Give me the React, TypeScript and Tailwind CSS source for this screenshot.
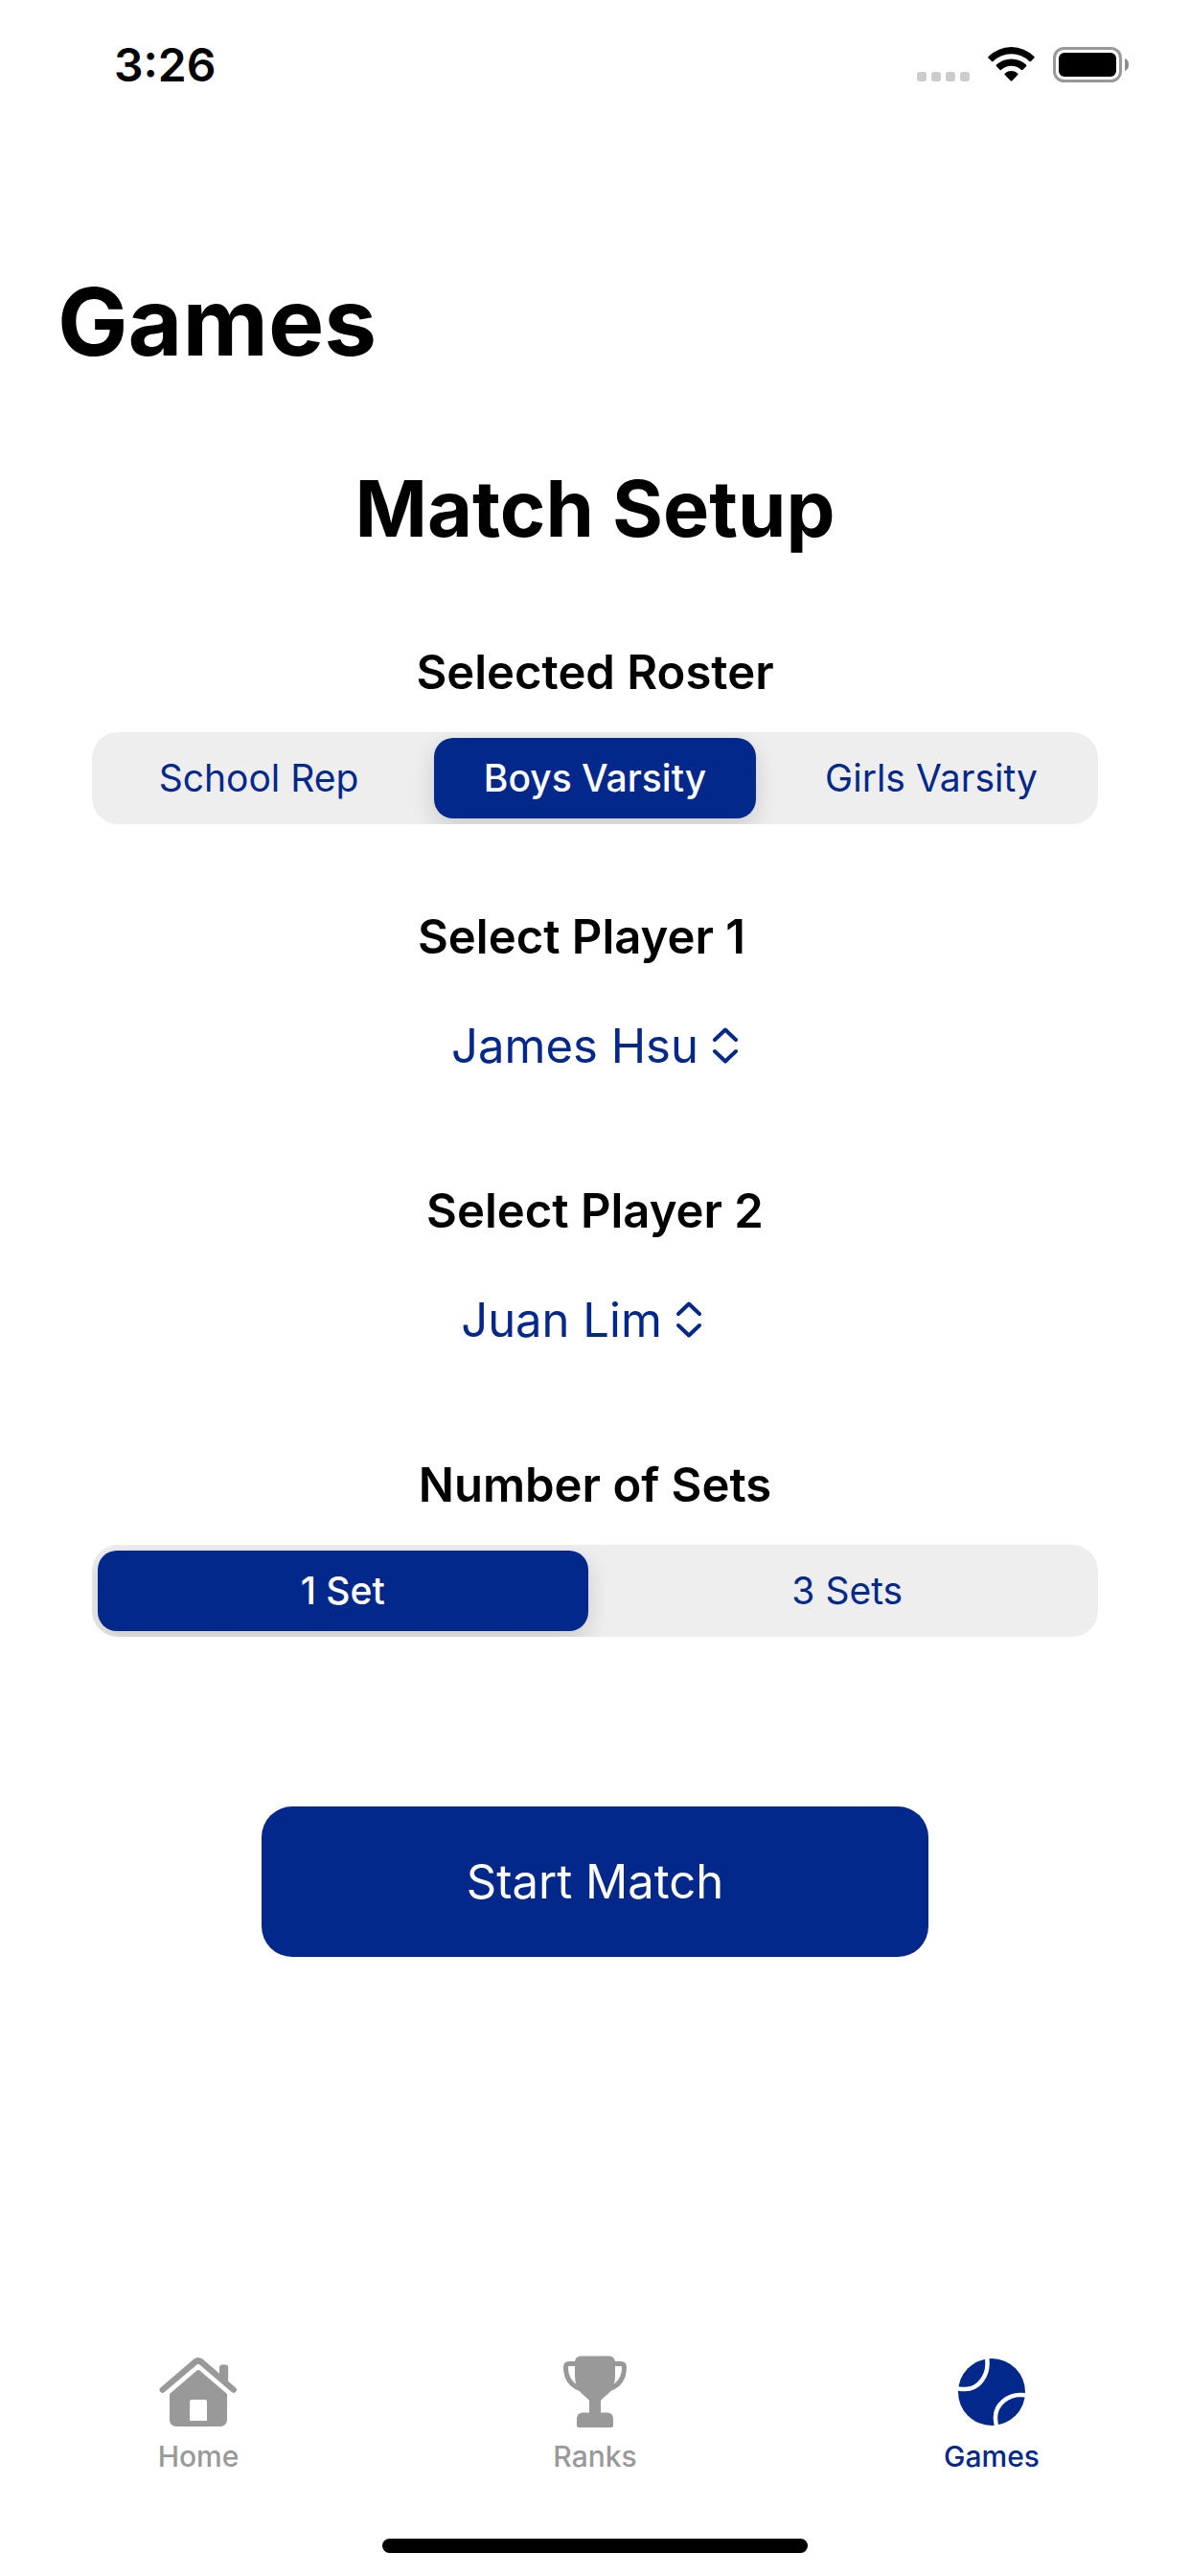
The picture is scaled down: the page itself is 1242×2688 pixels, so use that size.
import { useState, type ReactNode } from "react";

function WifiIcon() {
  return (
    <svg width="49" height="36" viewBox="0 0 49 36" aria-hidden="true">
      <path d="M0.6 9.9a34 34 0 0 1 47.8 0a1.2 1.2 0 0 1 0 1.6l-3.4 3.4a1.2 1.2 0 0 1-1.7 0a27 27 0 0 0-37.6 0a1.2 1.2 0 0 1-1.7 0l-3.4-3.4a1.2 1.2 0 0 1 0-1.6Z" />
      <path d="M9 18.6a22.6 22.6 0 0 1 31 0a1.2 1.2 0 0 1 0 1.7l-3.5 3.5a1.2 1.2 0 0 1-1.7 0a15.2 15.2 0 0 0-20.6 0a1.2 1.2 0 0 1-1.7 0l-3.5-3.5a1.2 1.2 0 0 1 0-1.7Z" />
      <path d="M17.9 27.5a10.3 10.3 0 0 1 13.2 0a1.1 1.1 0 0 1 0 1.7l-5.8 6.1a1.1 1.1 0 0 1-1.6 0l-5.8-6.1a1.1 1.1 0 0 1 0-1.7Z" />
    </svg>
  );
}

function BatteryIcon() {
  return (
    <svg width="80" height="37" viewBox="0 0 80 37" aria-hidden="true">
      <rect x="1.5" y="1.5" width="69" height="34" rx="10" fill="none" stroke="#999" strokeWidth="3" />
      <rect x="6" y="6" width="60" height="25" rx="6" />
      <path d="M75 12v13a6.8 6.8 0 0 0 4-6.5A6.8 6.8 0 0 0 75 12Z" fill="#8c8c8c" />
    </svg>
  );
}

function HomeIcon() {
  return (
    <svg width="82" height="75" viewBox="0 0 82 75" fill="currentColor" aria-hidden="true">
      <path d="M1.5 33.5 36.5 3.6a6.5 6.5 0 0 1 8.8 0L63 18.8V12.5a3 3 0 0 1 3-3h3.2a3 3 0 0 1 3 3v14.3l8 6.9a3.1 3.1 0 0 1-4.2 4.5L43 10a3.2 3.2 0 0 0-4.2 0L5.8 38A3.1 3.1 0 0 1 1.5 33.5Z" />
      <path
        fillRule="evenodd"
        d="M11 40 39 16a3 3 0 0 1 4 0l28 24v27a7 7 0 0 1-7 7H18a7 7 0 0 1-7-7V40Zm21 8v20h18V48a2 2 0 0 0-2-2H34a2 2 0 0 0-2 2Z"
      />
    </svg>
  );
}

function TrophyIcon() {
  return (
    <svg width="66" height="75" viewBox="0 0 66 75" fill="currentColor" aria-hidden="true">
      <path d="M18 0.5h30a6 6 0 0 1 6 6V20c0 8-2 14-6 18.5-3.5 3.5-7 5.5-9 8.5v13H27V47c-2-3-5.5-5-9-8.5C14 34 12 28 12 20V6.500a6 6 0 0 1 6-6Z" />
      <path
        d="M15 8.5H6Q2.5 8.5 2.5 12C2.5 24 9 31.5 18 35M51 8.5h9q3.5 0 3.5 3.5C63.5 24 57 31.5 48 35"
        fill="none"
        stroke="currentColor"
        strokeWidth="5"
      />
      <path d="M20 59.5h26a6 6 0 0 1 6 6V73a2 2 0 0 1-2 2H16a2 2 0 0 1-2-2v-7.5a6 6 0 0 1 6-6Z" />
    </svg>
  );
}

function TennisBallIcon() {
  return (
    <svg width="70" height="75" viewBox="0 0 70 75" aria-hidden="true">
      <circle cx="35" cy="38" r="35" fill="currentColor" />
      <path
        d="M30 2C33 20 22 35 7 35Q3 35 -1 34.3M71 41.5C52 38 38 52 39 66Q39 70 40.5 74"
        fill="none"
        stroke="#fff"
        strokeWidth="4.5"
      />
    </svg>
  );
}

function StatusBar() {
  return (
    <header className="flex items-start justify-between pt-[38px] pr-[63px] pl-[119px]">
      <time className="text-[48px] leading-[60px] font-semibold">3:26</time>
      <div className="flex items-end pt-[11px]">
        <div className="mr-[19px] flex gap-[5px] pb-px">
          {[0, 1, 2, 3].map((dot) => (
            <span key={dot} className="size-[10px] rounded-[3px] bg-[#ccc]" />
          ))}
        </div>
        <div className="mr-[19px] pb-px">
          <WifiIcon />
        </div>
        <BatteryIcon />
      </div>
    </header>
  );
}

type SegmentedProps = {
  name: string;
  label: string;
  options: string[];
  value: string;
  onChange: (value: string) => void;
};

function Segmented({ name, label, options, value, onChange }: SegmentedProps) {
  return (
    <fieldset className="w-full">
      <legend className="mx-auto mb-8 text-[49px] leading-[60px] font-semibold">{label}</legend>
      <div className="grid auto-cols-fr grid-flow-col gap-[15px] overflow-hidden rounded-[27px] bg-[#eee] p-[6px]">
        {options.map((option) => (
          <label
            key={option}
            className="flex h-[84px] cursor-pointer items-center justify-center rounded-[20px] text-[39px] text-[#02288c] has-checked:bg-[#02288c] has-checked:font-medium has-checked:text-white has-checked:shadow-[0_9px_24px_rgba(0,0,0,0.15)]"
          >
            <input
              type="radio"
              name={name}
              value={option}
              checked={option === value}
              onChange={() => onChange(option)}
              className="sr-only"
            />
            {option}
          </label>
        ))}
      </div>
    </fieldset>
  );
}

type PickerProps = {
  id: string;
  label: string;
  options: string[];
  value: string;
  onChange: (value: string) => void;
};

function Picker({ id, label, options, value, onChange }: PickerProps) {
  return (
    <div className="flex flex-col items-center gap-[54px] odd:*:first:pr-7 even:*:last:pr-7">
      <label htmlFor={id} className="text-[49px] leading-[60px] font-semibold">
        {label}
      </label>
      <div>
        <div className="relative text-[#02288c]">
          <select
            id={id}
            value={value}
            onChange={(event) => onChange(event.target.value)}
            className="field-sizing-content h-[60px] cursor-pointer appearance-none bg-transparent pr-[42px] text-[49px] leading-[60px]"
          >
            {options.map((option) => (
              <option key={option}>{option}</option>
            ))}
          </select>
          <svg
            className="pointer-events-none absolute top-[9px] right-0"
            width="28"
            height="40"
            viewBox="0 0 28 40"
            fill="none"
            stroke="currentColor"
            strokeWidth="4"
            strokeLinecap="round"
            strokeLinejoin="round"
            aria-hidden="true"
          >
            <path d="M3 14 14 3.5 25 14M3 26 14 36.5 25 26" />
          </svg>
        </div>
      </div>
    </div>
  );
}

function Tab({ label, icon, active = false }: { label: string; icon: ReactNode; active?: boolean }) {
  return (
    <a
      href={`#${label.toLowerCase()}`}
      aria-current={active ? "page" : undefined}
      className="flex flex-1 flex-col items-center gap-3 text-[#999] aria-[current=page]:text-[#02288c]"
    >
      {icon}
      <span className="text-[30px] leading-9 font-medium">{label}</span>
    </a>
  );
}

export default function App() {
  const [roster, setRoster] = useState("Boys Varsity");
  const [playerOne, setPlayerOne] = useState("James Hsu");
  const [playerTwo, setPlayerTwo] = useState("Juan Lim");
  const [sets, setSets] = useState("1 Set");
  const players = ["James Hsu", "Juan Lim"];

  return (
    <div className="flex min-h-screen flex-col bg-white font-['Inter',sans-serif] text-black">
      <StatusBar />

      <main className="flex flex-col">
        <h1 className="mt-[178px] px-[60px] text-[98px] leading-[120px] font-bold">Games</h1>
        <h2 className="mt-[87px] text-center text-[81px] leading-[96px] font-bold">Match Setup</h2>

        <form className="mt-[93px] flex flex-col px-24" onSubmit={(event) => event.preventDefault()}>
          <Segmented
            name="roster"
            label="Selected Roster"
            options={["School Rep", "Boys Varsity", "Girls Varsity"]}
            value={roster}
            onChange={setRoster}
          />
          <div className="mt-[88px] mb-28 flex flex-col gap-28">
            <Picker id="player-one" label="Select Player 1" options={players} value={playerOne} onChange={setPlayerOne} />
            <Picker id="player-two" label="Select Player 2" options={players} value={playerTwo} onChange={setPlayerTwo} />
          </div>
          <Segmented
            name="sets"
            label="Number of Sets"
            options={["1 Set", "3 Sets"]}
            value={sets}
            onChange={setSets}
          />
          <button
            type="submit"
            className="mt-[177px] h-[157px] w-[696px] max-w-full self-center rounded-[32px] bg-[#02288c] text-[49px] leading-[60px] text-white"
          >
            Start Match
          </button>
        </form>
      </main>

      <footer className="mt-auto flex flex-col items-center pb-6">
        <nav className="flex w-full" aria-label="Main">
          <Tab label="Home" icon={<HomeIcon />} />
          <Tab label="Ranks" icon={<TrophyIcon />} />
          <Tab label="Games" icon={<TennisBallIcon />} active />
        </nav>
        <div className="mt-[68px] h-[15px] w-[444px] rounded-full bg-black" />
      </footer>
    </div>
  );
}
